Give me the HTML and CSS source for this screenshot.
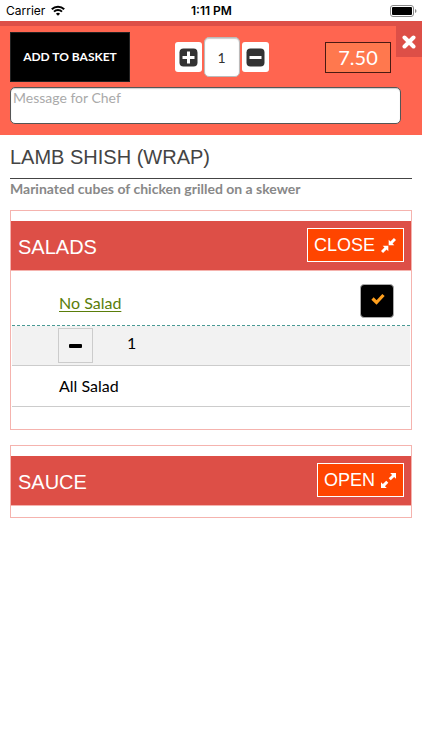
FILE: index.html
```html
<!DOCTYPE html>
<html lang="en">
<head>
<meta charset="utf-8">
<meta name="viewport" content="width=device-width, initial-scale=1">
<title>Lamb Shish (Wrap)</title>
<link rel="stylesheet" href="styles.css">
</head>
<body>
<div class="status">
  <div class="carrier">Carrier
    <svg width="14" height="11" viewBox="0 0 14 11" fill="none" stroke="#000" stroke-width="2"><path d="M.8 4.2a8.800 8.800 0 0 1 12.400 0M3 6.600a5.700 5.700 0 0 1 8 0"/><path d="M7 10.800 4.900 8.700a3 3 0 0 1 4.200 0z" fill="#000" stroke="none"/></svg>
  </div>
  <div class="time">1:11 PM</div>
  <svg class="battery" width="27" height="12" viewBox="0 0 27 12"><rect x=".5" y=".5" width="23" height="11" rx="2.5" fill="#fff" stroke="#888"/><rect x="2" y="2" width="20" height="8" rx="1" fill="#000"/><path d="M25 4q1.500.5 1.500 2T25 8z" fill="#888"/></svg>
</div>
<header class="order">
  <div class="controls">
    <button class="add" type="button">ADD TO BASKET</button>
    <div class="stepper">
      <button class="step" type="button" aria-label="Increase quantity">
        <svg width="19" height="19" viewBox="0 0 19 19"><rect x=".5" y=".5" width="18" height="18" rx="4" fill="#333"/><path d="M9.500 3.500v12M3.500 9.500h12" stroke="#fff" stroke-width="3"/></svg>
      </button>
      <input class="count" type="text" value="1" aria-label="Quantity">
      <button class="step" type="button" aria-label="Decrease quantity">
        <svg width="19" height="19" viewBox="0 0 19 19"><rect x=".5" y=".5" width="18" height="18" rx="4" fill="#333"/><path d="M3.500 9.500h12" stroke="#fff" stroke-width="3"/></svg>
      </button>
    </div>
    <output class="price">7.50</output>
  </div>
  <textarea class="message" placeholder="Message for Chef" aria-label="Message for Chef"></textarea>
  <button class="dismiss" type="button" aria-label="Close">
    <svg width="14" height="14" viewBox="0 0 14 14"><path d="M2.500 2.500l9 9M11.500 2.500l-9 9" stroke="#fff" stroke-width="4" stroke-linecap="round"/></svg>
  </button>
</header>
<main class="item">
  <h1 class="title">LAMB SHISH (WRAP)</h1>
  <p class="about">Marinated cubes of chicken grilled on a skewer</p>
  <section class="group">
    <div class="bar">
      <h2 class="name">SALADS</h2>
      <button class="toggle" type="button">CLOSE
        <svg width="15" height="15" viewBox="0 0 16 16" fill="#fff"><path d="M8.200 1.800v6H14.200l-1.900-1.900L16 2.200 13.800 0l-3.700 3.700zM7.800 14.200v-6H1.800l1.900 1.900L0 13.800 2.200 16l3.700-3.700z"/></svg>
      </button>
    </div>
    <div class="row chosen">
      <a class="option" href="#no-salad">No Salad</a>
      <button class="tick" type="button" aria-label="No Salad selected">
        <svg width="14" height="12" viewBox="0 0 14 12"><path d="M1.500 5.500l4 4L12.500 2" fill="none" stroke="#ffa01e" stroke-width="3.200"/></svg>
      </button>
    </div>
    <div class="row amount">
      <button class="less" type="button" aria-label="Less">
        <svg width="13" height="4" viewBox="0 0 13 4"><rect width="13" height="4" rx="1"/></svg>
      </button>
      <span class="number">1</span>
    </div>
    <div class="row plain"><span>All Salad</span></div>
  </section>
  <section class="group">
    <div class="bar">
      <h2 class="name">SAUCE</h2>
      <button class="toggle" type="button">OPEN
        <svg width="15" height="15" viewBox="0 0 16 16" fill="#fff"><path d="M9.800 0H16v6.200l-2-2L10.400 7.800 8.200 5.600 11.800 2zM6.200 16H0V9.800l2 2L5.600 8.200l2.200 2.200L4.200 14z"/></svg>
      </button>
    </div>
  </section>
</main>
</body>
</html>
```
FILE: styles.css
```css
* { box-sizing: border-box; }
body {
  margin: 0;
  background: #fff;
  color: #000;
  font: 16px/20px Lato, sans-serif;
}
button, input, textarea { font: inherit; margin: 0; padding: 0; }
button { cursor: pointer; }
svg { display: block; flex: none; }

.status {
  display: grid;
  grid-template-columns: 1fr auto 1fr;
  align-items: center;
  height: 21px;
  padding: 0 5px 0 6px;
  font: 12px/20px Inter, sans-serif;
}
.carrier { display: flex; align-items: center; gap: 6px; }
.time { font-weight: 600; }
.battery { justify-self: end; }

.order {
  position: relative;
  padding: 6px 21px 11px 10px;
  border-top: 5px solid #dd4f47;
  background: #ff6550;
}
.controls {
  display: flex;
  align-items: center;
  justify-content: space-between;
  padding-right: 10px;
  margin-bottom: 5px;
}
.add {
  width: 120px;
  height: 50px;
  border: 1px solid #222;
  background: #000;
  color: #fff;
  font-size: 12px;
  font-weight: 700;
}
.stepper {
  display: flex;
  align-items: center;
  gap: 2px;
  margin-right: 12px;
}
.step {
  display: flex;
  align-items: center;
  justify-content: center;
  width: 27px;
  height: 30px;
  border: 0;
  border-radius: 3px;
  background: #fff;
}
.count {
  width: 36px;
  height: 40px;
  border: 1px solid #bbb;
  border-radius: 5px;
  background: #fff;
  color: #333;
  font-size: 14px;
  text-align: center;
  box-shadow: inset 0 1px 1px #ccc;
}
.price {
  width: 66px;
  height: 31px;
  border: 1px solid #4a1a12;
  background: #ff784e;
  color: #fff;
  font-size: 20px;
  line-height: 28px;
  text-align: center;
}
.message {
  display: block;
  width: 100%;
  height: 37px;
  padding: 0 2px;
  border: 1px solid #555;
  border-radius: 5px;
  background: #fff;
  font-size: 14px;
  resize: none;
  box-shadow: inset 0 1px 1px #ccc;
}
.message::placeholder { color: #aaa; }
.dismiss {
  position: absolute;
  top: 0;
  right: 0;
  display: flex;
  align-items: center;
  justify-content: center;
  width: 26px;
  height: 31px;
  border: 0;
  background: #dd4f47;
}

.item { padding: 10px; }
.title {
  margin: 0;
  padding-bottom: 9px;
  border-bottom: 1px solid #444;
  color: #444;
  font: 20px/24px "Liberation Sans", sans-serif;
}
.about {
  margin: 0 0 11px;
  color: #888;
  font-size: 14px;
  font-weight: 700;
}
.group {
  margin-bottom: 15px;
  padding: 10px 0 11px;
  border: 1px solid #f5b3ae;
}
.group:first-of-type { padding-bottom: 22px; }
.bar {
  display: flex;
  align-items: center;
  justify-content: space-between;
  height: 50px;
  padding: 0 7px 1px;
  border-bottom: 1px solid #f5b3ae;
  background: #dd4f47;
  color: #fff;
}
.name { margin: 0; padding-top: 4px; font: 20px/24px "Liberation Sans", sans-serif; }
.toggle {
  display: flex;
  align-items: center;
  gap: 6px;
  height: 34px;
  padding: 0 7px 0 6px;
  border: 1px solid #fff;
  background: #ff4500;
  color: #fff;
  font: 18px/24px "Liberation Sans", sans-serif;
}
.row {
  display: flex;
  align-items: center;
  margin: 0 1px;
  padding: 0 16px 0 47px;
  border-bottom: 1px solid #ccc;
}
.chosen {
  justify-content: space-between;
  height: 55px;
  padding-top: 6px;
  border-bottom: 1px dashed #4a9a94;
}
.option { padding-top: 4px; color: #5a7d0a; text-underline-offset: 2px; }
.tick {
  display: flex;
  align-items: center;
  justify-content: center;
  width: 34px;
  height: 34px;
  padding: 0 0 4px 2px;
  border: 1px solid #aaa;
  border-radius: 4px;
  background: #000;
}
.amount {
  align-items: flex-start;
  gap: 34px;
  height: 40px;
  padding-top: 2px;
  padding-left: 46px;
  background: #f2f2f2;
}
.number { padding-top: 5px; }
.less {
  display: flex;
  align-items: center;
  justify-content: center;
  width: 35px;
  height: 35px;
  border: 1px solid #ccc;
  background: #f2f2f2;
}
.plain { height: 41px; }
```
